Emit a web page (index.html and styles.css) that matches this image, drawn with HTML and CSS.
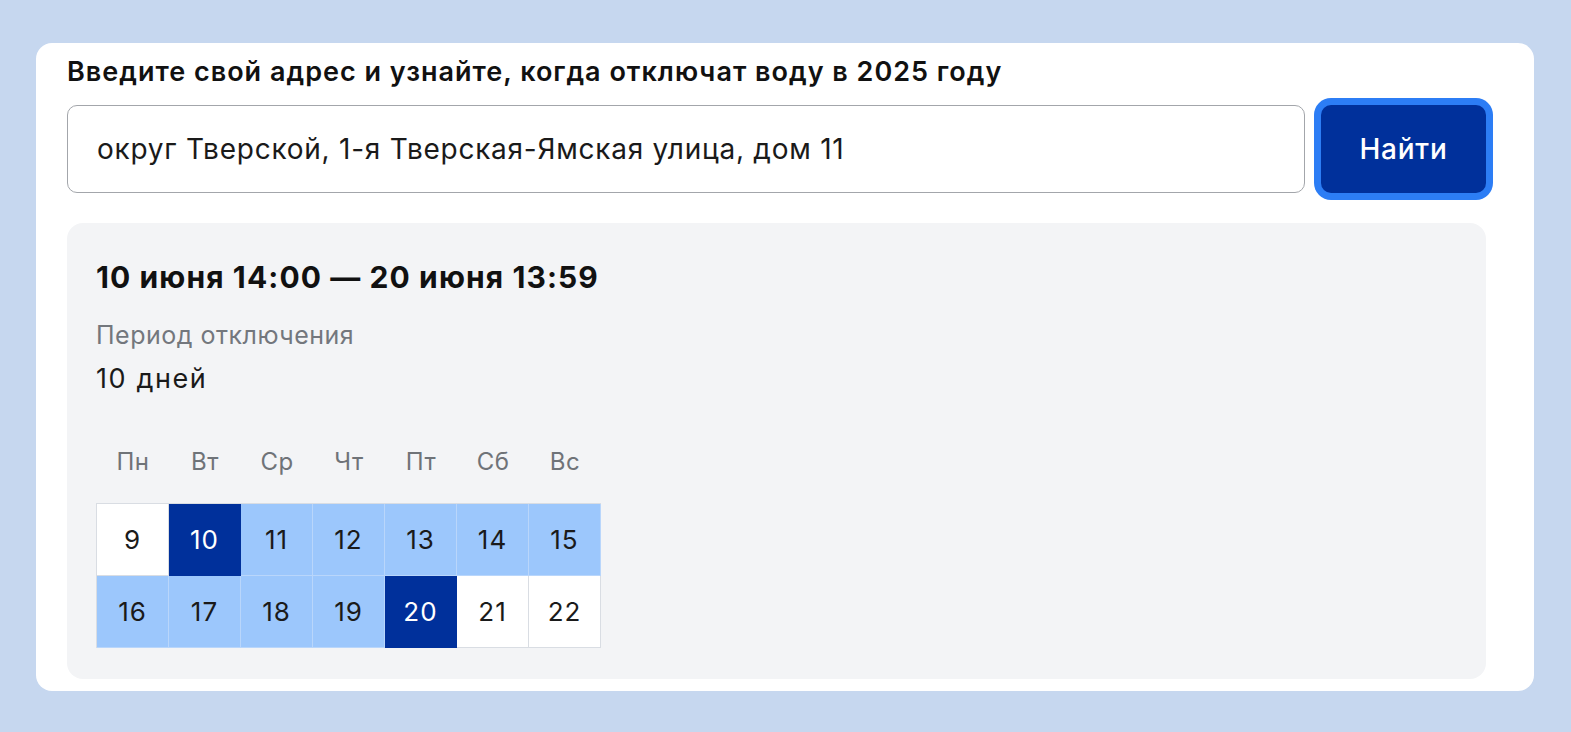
FILE: index.html
```html
<!DOCTYPE html>
<html lang="ru">
<head>
	<meta charset="UTF-8">
	<title>Отключение воды</title>
	<link rel="stylesheet" href="styles.css">
</head>
<body>
	<section class="card">
		<h1 class="title">Введите свой адрес и узнайте, когда отключат воду в 2025 году</h1>
		<div class="search">
			<div class="field">округ Тверской, 1-я Тверская-Ямская улица, дом 11</div>
			<button class="btn">Найти</button>
		</div>
		<div class="result">
			<div class="range">10 июня 14:00 — 20 июня 13:59</div>
			<div class="label">Период отключения</div>
			<div class="value">10 дней</div>
			<div class="week">
				<span>Пн</span>
				<span>Вт</span>
				<span>Ср</span>
				<span>Чт</span>
				<span>Пт</span>
				<span>Сб</span>
				<span>Вс</span>
			</div>
			<div class="days">
				<span>9</span>
				<span class="edge">10</span>
				<span class="off">11</span>
				<span class="off">12</span>
				<span class="off">13</span>
				<span class="off">14</span>
				<span class="off">15</span>
				<span class="off">16</span>
				<span class="off">17</span>
				<span class="off">18</span>
				<span class="off">19</span>
				<span class="edge">20</span>
				<span>21</span>
				<span>22</span>
			</div>
		</div>
	</section>
</body>
</html>
```

FILE: styles.css
```css
body{
	margin: 0;
	padding: 43px 0 0 36px;
	height: 732px;
	box-sizing: border-box;
	background: #c6d7ef;
	font-family: Inter, "Liberation Sans", Arial, sans-serif;
	color: #1a1a1a;
}
.card{
	width: 1498px;
	box-sizing: border-box;
	padding: 14px 48px 12px 31px;
	background: #fff;
	border-radius: 16px;
}
	.title{
		margin: 0;
		font-size: 27px;
		line-height: 30px;
		font-weight: 600;
		letter-spacing: 1px;
		color: #111;
	}
	.search{
		display: flex;
		gap: 16px;
		margin-top: 18px;
	}
		.field{
			flex: 1;
			height: 88px;
			box-sizing: border-box;
			padding: 0 29px;
			border: 1px solid #a3a6ab;
			border-radius: 10px;
			font-size: 28px;
			line-height: 86px;
			letter-spacing: 0.75px;
			color: #1a1a1a;
		}
		.btn{
			width: 165px;
			height: 88px;
			border: 0;
			border-radius: 10px;
			background: #00309b;
			box-shadow: 0 0 0 7px #2c7df5;
			color: #fff;
			font-family: inherit;
			font-size: 28px;
			font-weight: 500;
			letter-spacing: 0.8px;
		}
	.result{
		margin-top: 30px;
		padding: 32px 29px 31px;
		background: #f3f4f6;
		border-radius: 16px;
	}
		.range{
			font-size: 30px;
			line-height: 40px;
			font-weight: 700;
			letter-spacing: 1.1px;
			margin-top: 2px;
			color: #111;
		}
		.label{
			margin-top: 23px;
			font-size: 25px;
			line-height: 30px;
			letter-spacing: 0.5px;
			color: #73777d;
		}
		.value{
			margin-top: 14px;
			font-size: 27px;
			line-height: 30px;
			letter-spacing: 1.6px;
			color: #1a1a1a;
		}
		.week,.days{
			display: grid;
			grid-template-columns: repeat(7, 72px);
		}
		.week{
			margin-top: 50px;
			margin-left: 1px;
		}
			.week span{
				text-align: center;
				font-size: 24px;
				line-height: 36px;
				letter-spacing: 0.5px;
				color: #6f7378;
			}
		.days{
			margin-top: 23px;
			width: max-content;
			border-left: 1px solid #d9dde3;
			border-top: 1px solid #d9dde3;
		}
			.days span{
				height: 71px;
				border-right: 1px solid #d9dde3;
				border-bottom: 1px solid #d9dde3;
				width: 71px;
				background: #fff;
				text-align: center;
				font-size: 26px;
				line-height: 71px;
				letter-spacing: 1px;
				color: #1a1a1a;
			}
			.days .off{
				background: #9cc7fc;
				border-color: #b9d6fb;
			}
			.days .edge{
				background: #00309b;
				border-color: #00309b;
				color: #fff;
			}
```
